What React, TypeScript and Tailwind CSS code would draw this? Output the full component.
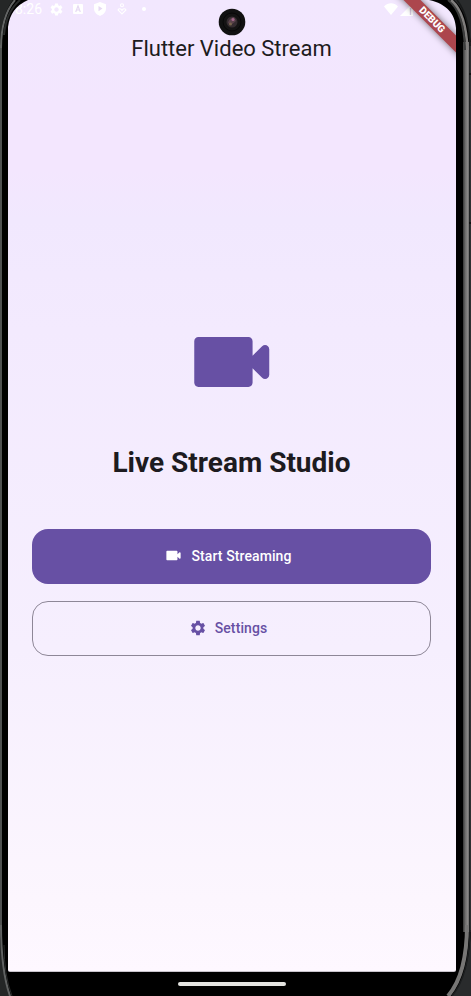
import React from "react";

const roundedCam =
  "M17 10.5V7c0-.55-.45-1-1-1H4c-.55 0-1 .45-1 1v10c0 .55.45 1 1 1h12c.55 0 1-.45 1-1v-3.5l2.29 2.29c.63.63 1.71.18 1.71-.71V8.91c0-.89-1.08-1.34-1.71-.71L17 10.5z";
const cog =
  "M19.14 12.94c.04-.3.06-.61.06-.94 0-.32-.02-.64-.07-.94l2.03-1.58c.18-.14.23-.41.12-.61l-1.92-3.32c-.12-.22-.37-.29-.59-.22l-2.39.96c-.5-.38-1.03-.7-1.62-.94L14.4 2.81c-.04-.24-.24-.41-.48-.41h-3.84c-.24 0-.43.17-.47.41l-.36 2.54c-.59.24-1.13.57-1.62.94l-2.39-.96c-.22-.08-.47 0-.59.22L2.74 8.87c-.12.21-.08.47.12.61l2.03 1.58c-.05.3-.09.63-.09.94s.02.64.07.94l-2.03 1.58c-.18.14-.23.41-.12.61l1.92 3.32c.12.22.37.29.59.22l2.39-.96c.5.38 1.03.7 1.62.94l.36 2.54c.05.24.24.41.48.41h3.84c.24 0 .44-.17.47-.41l.36-2.54c.59-.24 1.13-.56 1.62-.94l2.39.96c.22.08.47 0 .59-.22l1.92-3.32c.12-.22.07-.47-.12-.61l-2.01-1.58zM12 15.6c-1.98 0-3.6-1.62-3.6-3.6s1.62-3.6 3.6-3.6 3.6 1.62 3.6 3.6-1.62 3.6-3.6 3.6z";

function Icon({ d, className }: { d: string; className: string }) {
  return (
    <svg viewBox="0 0 24 24" fill="currentColor" className={className}>
      <path fillRule="evenodd" d={d} />
    </svg>
  );
}

function StatusBar() {
  return (
    <div className="flex h-[18px] shrink-0 items-center pl-[7px] pr-[43px] text-white">
      <span className="w-[28px] text-[14px] leading-[18px]">8:26</span>
      <Icon d={cog} className="ml-[6px] size-[15px]" />
      <svg viewBox="0 0 12 12" className="ml-[8px] size-[12px]">
        <rect x="1" y="1" width="10" height="10" rx="1" fill="white" />
        <path d="M3.7 9 6 3l2.3 6M4.5 7h3" fill="none" stroke="#e6d9f3" strokeWidth="1.2" />
      </svg>
      <svg viewBox="0 0 12 14" className="ml-[10px] h-[14px] w-[12px]">
        <path d="M6 0 12 2.2v4.4C12 10 9.5 12.7 6 14 2.5 12.7 0 10 0 6.600V2.200z" fill="white" />
        <path d="M4.500 4v5.200L8.500 6.600z" fill="#e6d9f3" />
      </svg>
      <svg viewBox="0 0 10 12" className="ml-[11px] h-[12px] w-[10px]" fill="none" stroke="white" strokeWidth="1.100">
        <circle cx="5" cy="2.300" r="1.500" />
        <path d="M1 7C2 5.200 4 5.500 5 7.500 6 5.500 8 5.200 9 7L5 11z" />
      </svg>
      <span className="ml-[15px] size-[4px] rounded-full bg-white" />
      <span className="grow" />
      <svg viewBox="0 0 14 12" className="h-[12px] w-[14px]">
        <path d="M0 3.500C4-.8 10-.8 14 3.500L7 12z" fill="white" />
      </svg>
      <svg viewBox="0 0 13 13" className="ml-[2px] size-[13px]">
        <path d="M0 13 13 0v13z" fill="white" />
        <path d="M10.500 5v7" stroke="#d8cbe2" strokeWidth="1.300" />
      </svg>
    </div>
  );
}

/* Metal rim of the handset, drawn over the screen's corners. */
function DeviceFrame() {
  return (
    <svg viewBox="0 0 471 996" className="pointer-events-none absolute inset-0 h-[996px] w-[471px]" fill="none">
      <defs>
        <linearGradient id="rim" x1="463" x2="471" y1="0" y2="0" gradientUnits="userSpaceOnUse">
          <stop offset="0" stopColor="#373737" />
          <stop offset=".3" stopColor="#6e6d6c" />
          <stop offset=".6" stopColor="#8c8a89" />
          <stop offset=".75" stopColor="#656463" />
          <stop offset=".8" stopColor="#202223" />
          <stop offset="1" stopColor="#343738" />
        </linearGradient>
      </defs>
      <path d="M0 0H28Q10 8 8 27V40H0z" fill="#000" />
      <path d="M471 0H429C447 4 455 14 456 28V40H471z" fill="#000" />
      <path d="M0 45h2v885H0z" fill="#505252" />
      <path d="M0 45Q1 15 13 0H0z" fill="#252727" />
      <path d="M1 48Q1 16 15 0" stroke="#626464" strokeWidth="2" />
      <path d="M4 35Q6 12 20 0" stroke="#292b2b" strokeWidth="2" />
      <path d="M463 42h8v890h-8z" fill="url(#rim)" />
      <path d="M454 0Q468 12 471 46V0z" fill="#292b2c" />
      <path d="M448 0Q464 12 465 50" stroke="#3c3d3d" strokeWidth="2" />
      <path d="M451 0Q466 12 467.500 50" stroke="#807e7d" strokeWidth="2.500" />
      <path d="M457 0Q469 15 470 46" stroke="#171919" strokeWidth="1.500" />
      <path d="M469 74h2M469 223h2" stroke="#111" strokeWidth="2" />
      <path d="M0 930Q1 972 11 996H0z" fill="#242626" />
      <path d="M1 925Q1 970 10 996" stroke="#606262" strokeWidth="2" />
      <path d="M4 945Q4 975 12 996" stroke="#292b2b" strokeWidth="1" />
      <path d="M471 925Q470 975 452 996H471z" fill="#292b2c" />
      <path d="M467 925Q467 974 448 996" stroke="#777675" strokeWidth="4" />
      <path d="M470 930Q469 976 452 996" stroke="#1c1e1f" strokeWidth="1.500" />
    </svg>
  );
}

export default function App() {
  return (
    <div className="relative flex h-[996px] w-[471px] flex-col overflow-hidden bg-black pl-[8px] pr-[15px] font-[Roboto,sans-serif]">
      <main className="relative flex h-[972px] w-full shrink-0 flex-col overflow-hidden rounded-b-[2px] border-b border-[#c9c4cc] bg-[linear-gradient(180deg,#f2e7fe_0px,#f3e6fe_110px,#f3e6fe_170px,#f1e8fe_220px,#f3eafe_330px,#f6effe_650px,#fcf6fe_900px,#fef8ff_972px)]">
        <StatusBar />
        <header className="flex h-[60px] shrink-0 items-center justify-center pr-[1px] pt-[2px]">
          <h1 className="text-[22px] leading-[28px] text-[#1d1b20]">Flutter Video Stream</h1>
        </header>
        <section className="flex flex-col items-center pl-[24px] pr-[25px] pt-[234px]">
          <Icon d={roundedCam} className="size-[100px] shrink-0 -translate-x-[0.25px] text-[#6750a4]" />
          <h2 className="mt-[33px] text-[28px] font-bold leading-[36px] text-[#1d1b20]">Live Stream Studio</h2>
          <button className="mt-[47.500px] flex h-[55.500px] w-full items-center justify-center gap-[8px] rounded-[16px] bg-[#6750a4] pb-[1px] pr-[7px] text-[14px] font-medium leading-[20px] tracking-[0.1px] text-white">
            <Icon d={roundedCam} className="size-[19px]" />
            <span>Start Streaming</span>
          </button>
          <button className="mt-[16.500px] flex h-[55.500px] w-full items-center justify-center gap-[8px] rounded-[16px] border border-[#8e8797] pb-[1px] pr-[7px] text-[14px] font-medium leading-[20px] tracking-[0.1px] text-[#6750a4]">
            <Icon d={cog} className="size-[18px]" />
            <span>Settings</span>
          </button>
        </section>
        <div className="absolute left-[374px] top-[14px] flex h-[12px] w-[100px] rotate-45 items-center justify-center bg-[#ac464d] text-[10px] font-black leading-none text-white shadow-[0_0_7px_rgba(0,0,0,.55)]">
          DEBUG
        </div>
        <svg viewBox="0 0 28 28" className="absolute left-[210px] top-[8px] size-[28px]">
          <circle cx="14" cy="14" r="13.300" fill="#111" />
          <circle cx="14" cy="14" r="9" fill="#141313" stroke="#080808" />
          <circle cx="14" cy="14" r="5.500" fill="#352c30" />
          <path d="M10 15q1-5 6-6l2 4-5 4z" fill="#5a424b" />
          <circle cx="15" cy="11.500" r="1.500" fill="#a5688c" />
          <circle cx="12.500" cy="16" r="1.500" fill="#77634b" />
        </svg>
      </main>
      <footer className="flex h-[24px] w-full items-center justify-center pb-[1px]">
        <div className="h-[4px] w-[108px] rounded-full bg-[#e4e4e1]" />
      </footer>
      <DeviceFrame />
    </div>
  );
}
